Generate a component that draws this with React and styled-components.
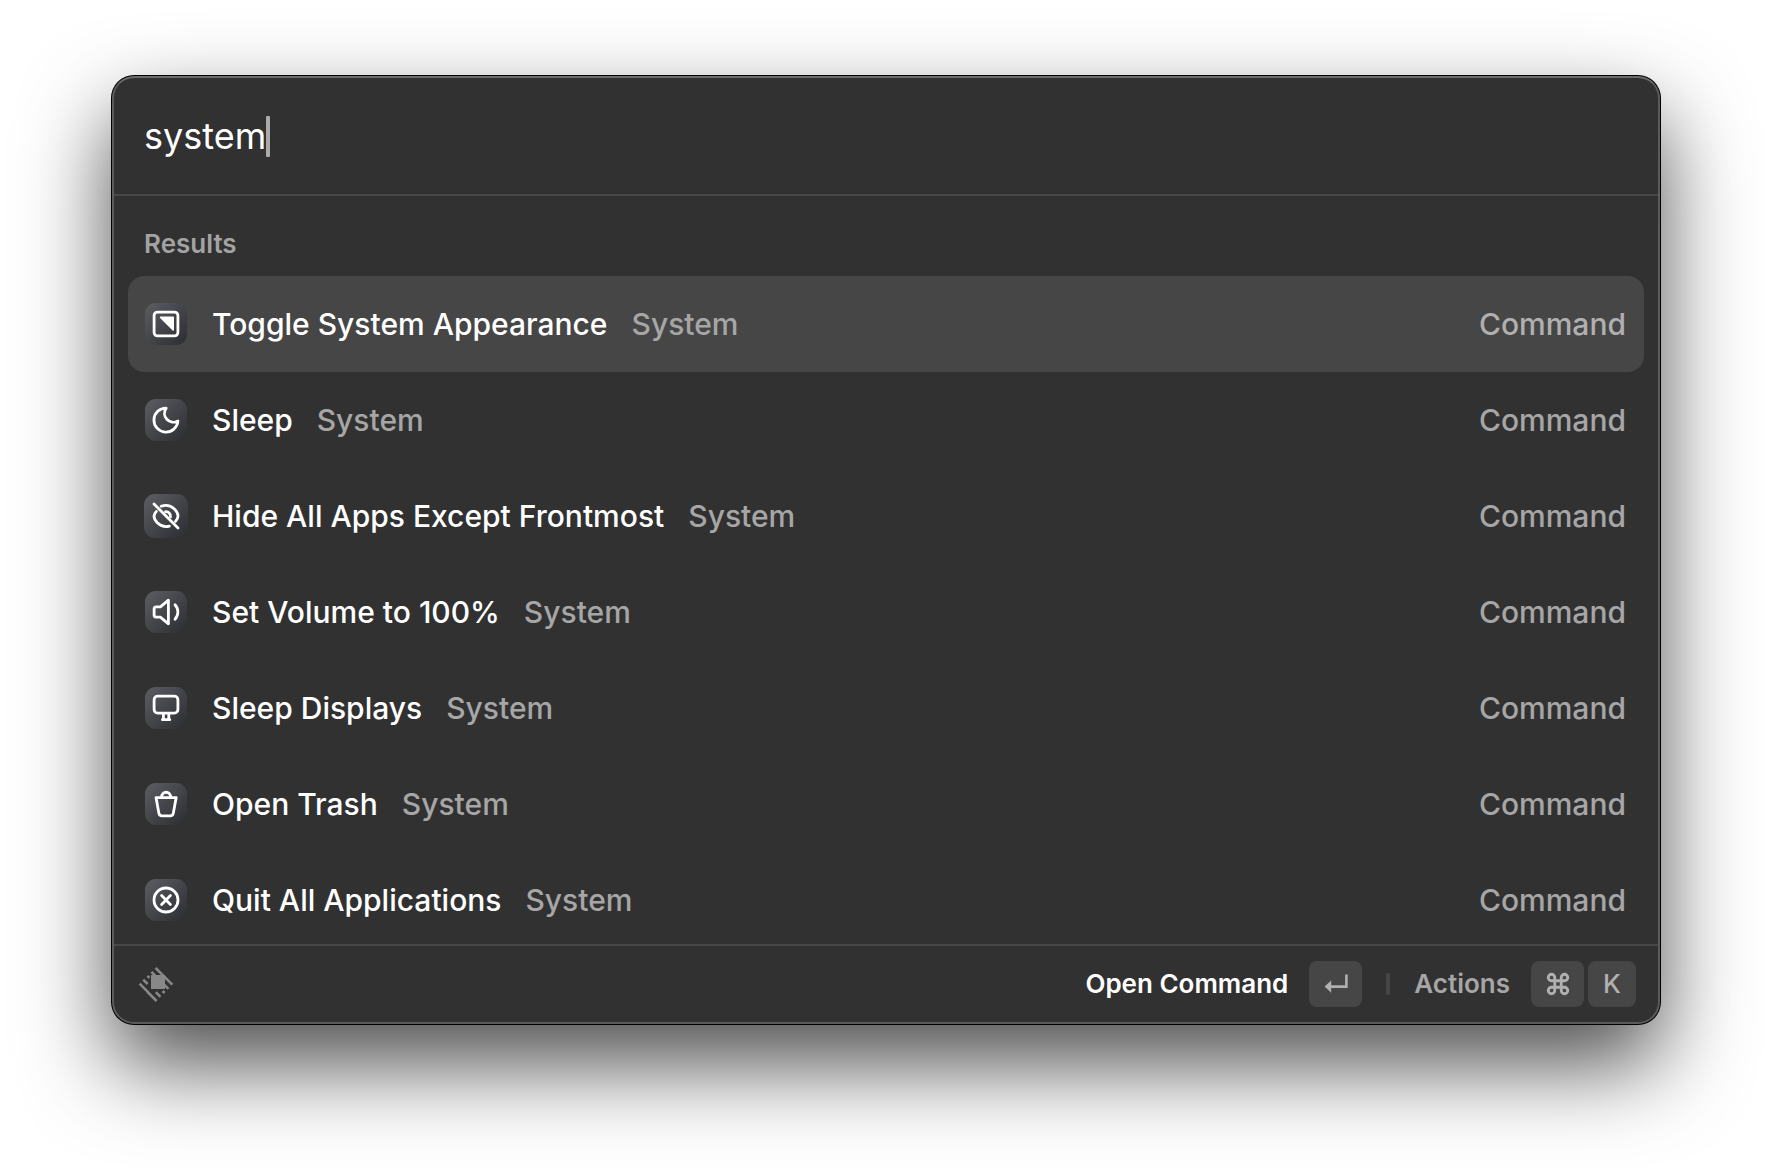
import React, { useState } from "react";
import styled, { createGlobalStyle } from "styled-components";
import { Command as CommandGlyph } from "lucide-react";

const GlobalStyle = createGlobalStyle`
  *, *::before, *::after { box-sizing: border-box; }
  body { margin: 0; background: #ffffff; }
  body, button, input { font-family: Inter, "Liberation Sans", sans-serif; }
`;

const Page = styled.main`
  padding: 76px 112px 148px;
  overflow: hidden;
`;

const Launcher = styled.section`
  display: flex;
  flex-direction: column;
  border: 2px solid #5b5b5b;
  border-top-color: #6c6c6c;
  border-radius: 22px;
  background: #313131;
  box-shadow: 0 0 0 1px #000000, 0 40px 88px rgba(0, 0, 0, 0.7);
`;

const SearchBar = styled.header`
  display: flex;
  align-items: center;
  height: 118px;
  padding: 0 30px;
  border-bottom: 2px solid #474747;
`;

const SearchInput = styled.input`
  field-sizing: content;
  max-width: 100%;
  padding: 0;
  border: 0;
  outline: 0;
  background: transparent;
  color: #ffffff;
  caret-color: transparent;
  font-size: 36px;
  line-height: 44px;
`;

const Caret = styled.span`
  width: 4px;
  height: 41px;
  border-radius: 1px;
  background: #a9a9a9;
`;

const Results = styled.div`
  height: 748px;
  padding: 0 14px;
  overflow: hidden auto;
  scrollbar-width: none;
`;

const Heading = styled.h2`
  margin: 0;
  padding: 32px 16px 16px;
  color: #a3a3a3;
  font-size: 26px;
  font-weight: 600;
  line-height: 32px;
`;

const List = styled.ul`
  margin: 0;
  padding: 0;
  list-style: none;
`;

const Row = styled.button`
  display: flex;
  align-items: center;
  gap: 24px;
  width: 100%;
  height: 96px;
  padding: 0 18px 0 16px;
  border: 0;
  border-radius: 16px;
  background: ${(p) => (p.$selected ? "#464646" : "transparent")};
  font-size: 30px;
  line-height: 36px;
  text-align: left;
`;

const IconSlot = styled.span`
  display: flex;
  justify-content: center;
  width: 44px;
`;

const Tile = styled.span`
  display: flex;
  width: ${(p) => p.$size}px;
  height: ${(p) => p.$size}px;
  border-radius: 11px;
  background: linear-gradient(135deg, #5d5e63 0%, #44454a 50%, #2c2d31 100%);
`;

const Title = styled.span`
  color: #ffffff;
  font-weight: 500;
`;

const Subtitle = styled.span`
  flex: 1;
  color: #a6a6a6;
  font-weight: 450;
`;

const Kind = styled.span`
  color: ${(p) => (p.$selected ? "#b0b0b0" : "#a6a6a6")};
  font-weight: 450;
`;

const Footer = styled.footer`
  display: flex;
  align-items: center;
  justify-content: space-between;
  height: 78px;
  padding: 0 22px;
  border-top: 2px solid #474747;
`;

const Actions = styled.div`
  display: flex;
  align-items: center;
  gap: 24px;
`;

const Action = styled.button`
  display: flex;
  align-items: center;
  gap: 21px;
  padding: 0;
  border: 0;
  background: none;
  color: ${(p) => (p.$primary ? "#ffffff" : "#a6a6a6")};
  font-size: 26px;
  font-weight: 600;
  line-height: 32px;
`;

const Keys = styled.span`
  display: flex;
  gap: 4px;
`;

const Key = styled.kbd`
  display: flex;
  align-items: center;
  justify-content: center;
  min-width: ${(p) => (p.$wide ? 53 : 48)}px;
  height: 46px;
  border-radius: 8px;
  background: #464646;
  color: #b0b0b0;
  font-family: inherit;
  font-size: 26px;
  font-weight: 500;
`;

const Separator = styled.span`
  width: 4px;
  height: 22px;
  border-radius: 2px;
  background: #464646;
`;

function Glyph({ size = 42, children }) {
  return (
    <svg
      width={size}
      height={size}
      viewBox={`0 0 ${size} ${size}`}
      fill="none"
      stroke="#ffffff"
      strokeWidth="2.8"
      strokeLinecap="round"
      strokeLinejoin="round"
      aria-hidden="true"
    >
      {children}
    </svg>
  );
}

const icons = {
  appearance: (
    <>
      <rect x="9.1" y="9.1" width="23.8" height="23.8" rx="3.4" />
      <path d="M15.6 14.4H28.2V27Z" fill="#ffffff" strokeWidth="1.6" />
    </>
  ),
  moon: <path d="M21.2 9.1A12 12 0 1 0 32.9 22A8.9 8.9 0 0 1 21.2 9.1Z" />,
  hidden: (
    <>
      <path d="M10 10L34 34" />
      <path d="M17.2 12.2C18.7 11.6 20.3 11.3 22 11.3C28.4 11.3 34 17.6 34 22C34 23.8 33 25.7 31.5 27.4" />
      <path d="M12.4 17.4C11 19 10 20.7 10 22C10 26.4 15.6 32.7 22 32.7C23.2 32.7 24.3 32.5 25.4 32.2" />
      <path d="M21.5 17.6C24.4 17.4 26.8 19.7 26.5 22.8" />
    </>
  ),
  volume: (
    <>
      <path d="M23.4 9.2V32.8L15.4 26.2H11.2C10 26.2 9.1 25.3 9.1 24.1V17.9C9.1 16.7 10 15.8 11.2 15.8H15.4Z" />
      <path d="M30 13.7C33.8 17.8 33.8 24.2 30 28.3" />
    </>
  ),
  display: (
    <>
      <rect x="9.1" y="9.1" width="23.8" height="17" rx="3.6" />
      <path d="M18.4 26.4V32.2M23.8 26.4V32.2M17.4 32.7H24.8" />
    </>
  ),
  trash: (
    <>
      <path d="M11 14.6H31.2L28.3 30.2C28 31.8 26.9 32.8 25.3 32.8H16.9C15.3 32.8 14.2 31.8 13.9 30.2Z" />
      <path d="M16.6 14.2C16.6 7.6 25.6 7.6 25.6 14.2" />
    </>
  ),
  quit: (
    <>
      <circle cx="21" cy="21" r="12" />
      <path d="M16.6 16.6L25.4 25.4M25.4 16.6L16.6 25.4" />
    </>
  ),
};

function Logo() {
  return (
    <svg width="40" height="40" viewBox="0 0 40 40" fill="none" stroke="#888888" strokeWidth="2.6" aria-label="Launcher" role="img">
      <path d="M15 11H29V25H15Z" fill="#888888" stroke="none" />
      <path d="M19.5 3.8L36.3 20.6" />
      <path d="M15.4 7.8L20.4 12.8M27.4 19.8L32.4 24.8" />
      <path d="M11.4 11.8L13.4 13.8M26.6 27L28.6 29" />
      <path d="M7.2 15.6L11.6 20M19.8 28.2L24.4 32.8" />
      <path d="M3.6 19.6L11.8 27.8M11.6 28L20.6 37" />
    </svg>
  );
}

function ReturnGlyph() {
  return (
    <svg width="24" height="20" viewBox="0 0 24 20" fill="none" aria-hidden="true">
      <path d="M22.4 0.6V12.6H6" stroke="#b0b0b0" strokeWidth="2.6" />
      <path d="M0.6 12.6L7.2 6.4V18.8Z" fill="#b0b0b0" />
    </svg>
  );
}

const commands = [
  { icon: "appearance", title: "Toggle System Appearance" },
  { icon: "moon", title: "Sleep" },
  { icon: "hidden", title: "Hide All Apps Except Frontmost", size: 44 },
  { icon: "volume", title: "Set Volume to 100%" },
  { icon: "display", title: "Sleep Displays" },
  { icon: "trash", title: "Open Trash" },
  { icon: "quit", title: "Quit All Applications" },
];

export default function App() {
  const [query, setQuery] = useState("system");
  const [selected, setSelected] = useState(0);

  return (
    <>
      <GlobalStyle />
      <Page>
        <Launcher>
          <SearchBar>
            <SearchInput
              aria-label="Search commands"
              value={query}
              onChange={(e) => setQuery(e.target.value)}
            />
            <Caret />
          </SearchBar>
          <Results>
            <Heading>Results</Heading>
            <List>
              {commands.map(({ icon, title, size = 42 }, i) => (
                <li key={icon}>
                  <Row type="button" $selected={i === selected} onClick={() => setSelected(i)}>
                    <IconSlot>
                      <Tile $size={size}>
                        <Glyph size={size}>{icons[icon]}</Glyph>
                      </Tile>
                    </IconSlot>
                    <Title>{title}</Title>
                    <Subtitle>System</Subtitle>
                    <Kind $selected={i === selected}>Command</Kind>
                  </Row>
                </li>
              ))}
            </List>
          </Results>
          <Footer>
            <Logo />
            <Actions>
              <Action type="button" $primary>
                Open Command
                <Key $wide>
                  <ReturnGlyph />
                </Key>
              </Action>
              <Separator />
              <Action type="button">
                Actions
                <Keys>
                  <Key $wide>
                    <CommandGlyph size={26} strokeWidth={2.6} />
                  </Key>
                  <Key>K</Key>
                </Keys>
              </Action>
            </Actions>
          </Footer>
        </Launcher>
      </Page>
    </>
  );
}
